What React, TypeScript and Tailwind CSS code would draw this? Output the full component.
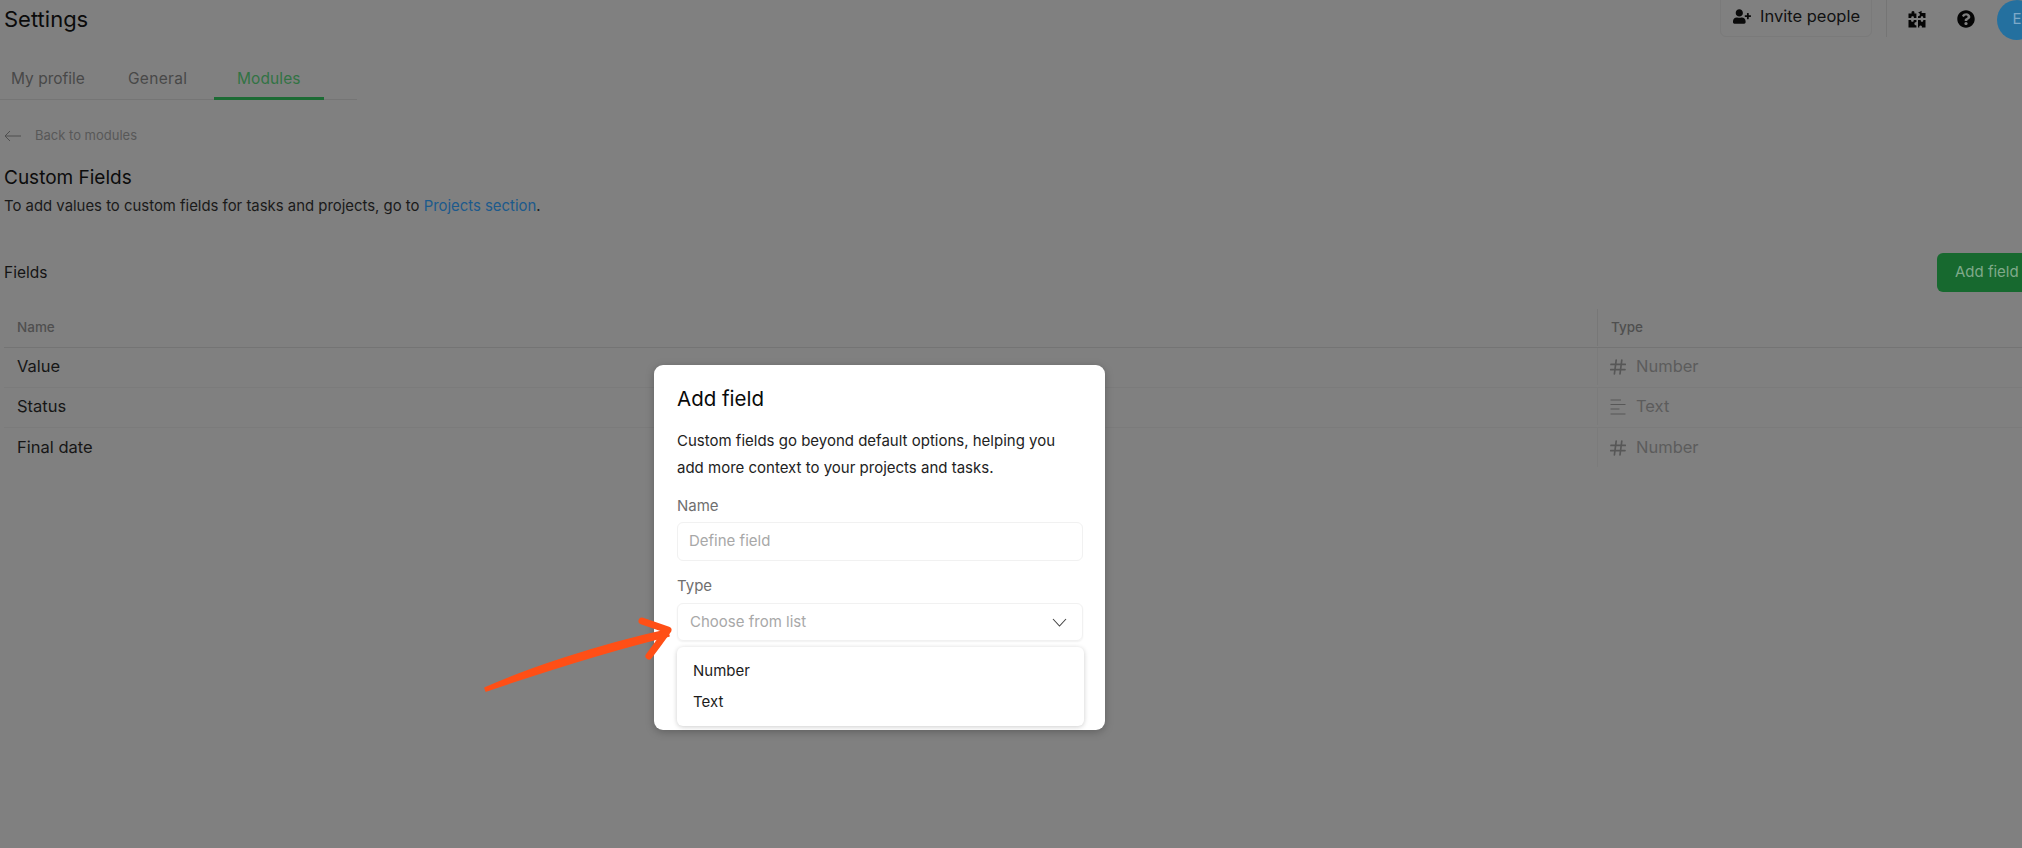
import React from "react";
import { FaUserPlus, FaQuestionCircle } from "react-icons/fa";

const poppins = "font-['Inter','Liberation_Sans',sans-serif]";

function HashIcon() {
  return (
    <svg width="16" height="16" viewBox="0 0 16 16" fill="none" stroke="#575757" strokeWidth="1.7" strokeLinecap="round">
      <path d="M1 5.4H15.4M0.6 10.6H15M6.2 1L4.4 15M11.8 1L10 15" />
    </svg>
  );
}

function LinesIcon() {
  return (
    <svg width="16" height="16" viewBox="0 0 16 16" fill="none" stroke="#575757" strokeWidth="1.2">
      <path d="M0.5 1H11M0.5 5.5H15.5M0.5 10H9.5M0.5 15H15.5" />
    </svg>
  );
}

function PuzzleIcon() {
  return (
    <svg width="18" height="18" viewBox="0 0 18 18" fill="#050505">
      <path d="M0.5 3.5H3.6C3.2 1.8 4 1 5 1S6.8 1.8 6.4 3.5H8.4V8H5.8C6.2 6.8 5.6 6.2 4.6 6.2S3 6.8 3.4 8H0.5Z" />
      <path d="M10 2.8L13.6 0.8V3H17.5V8H15.2C15.5 6.9 15 6.3 14 6.3S12.5 6.9 12.8 8H10V6.3C11.3 6.2 11.9 5.6 11.9 4.6S11.3 3 10 2.8Z" />
      <path d="M0.5 10H3.2C2.8 11.2 3.4 11.8 4.4 11.8S6 11.2 5.6 10H8.4V12C7 12.2 6.4 12.8 6.4 13.8S7 15.2 8.4 15.4V17.5H0.5Z" />
      <path d="M10 10H12.8C12.5 11.2 13 11.8 14 11.8S15.5 11.2 15.2 10H17.5V17.5H13.8C14.2 16.2 13.6 15.4 12.6 15.4S11 16.2 11.4 17.5H10Z" />
    </svg>
  );
}

const rows = [
  { name: "Value", type: "Number", icon: <HashIcon />, h: "h-10" },
  { name: "Status", type: "Text", icon: <LinesIcon />, h: "h-10" },
  { name: "Final date", type: "Number", icon: <HashIcon />, h: "h-[41px]" },
];

export default function App() {
  return (
    <div className={`relative h-[848px] w-full overflow-hidden bg-[#808080] ${poppins}`}>
      <div className="flex w-[2037px] flex-col pl-1">
        {/* top bar */}
        <div className="flex h-[37px] items-center justify-between">
          <h1 className="text-[22px] leading-none font-normal text-[#0b0b0b]">Settings</h1>
          <div className="flex h-[37px] items-center">
            <button className="flex h-[43px] w-[152px] -translate-y-[3px] items-center gap-[9px] rounded-md border border-[#7a7a7a] pt-[2px] pl-[12px] text-[16.5px] text-[#111111]">
              <FaUserPlus className="h-[15px] w-[18px] text-[#0a0a0a]" />
              Invite people
            </button>
            <div className="ml-[14px] h-[37px] w-px bg-[#757575]" />
            <div className="ml-[21px]">
              <PuzzleIcon />
            </div>
            <FaQuestionCircle className="ml-[31px] h-[18px] w-[18px] text-[#050505]" />
            <div className="ml-[22px] flex h-10 w-10 translate-y-px items-center justify-center rounded-full bg-[#24709f] text-[15px] text-[#7ea9c8]">
              E
            </div>
          </div>
        </div>

        {/* tabs */}
        <div className="-ml-1 mt-[24px] flex h-[39px] w-[357px] border-b border-[#757575] text-[15.5px] text-[#484848]">
          <span className="ml-[11px] w-[117px] pt-[8px] leading-[20px]">My profile</span>
          <span className="w-[86px] pt-[8px] leading-[20px] tracking-[0.3px]">General</span>
          <span className="relative w-[110px] pt-[8px] pl-[23px] leading-[20px] tracking-[0.1px] text-[#327344]">
            Modules
            <span className="absolute right-0 -bottom-px left-0 h-[3px] bg-[#1c6b34]" />
          </span>
        </div>

        {/* back link */}
        <div className="mt-[26px] flex h-5 items-center gap-[14px] text-[13px] text-[#585858]">
          <svg width="17" height="12" viewBox="0 0 17 12" fill="none" stroke="#4f4f4f" strokeWidth="1">
            <path d="M17 6H1M6 1L1 6L6 11" />
          </svg>
          Back to modules
        </div>

        <h2 className="mt-[19px] text-[19px] leading-[26px] font-normal text-[#0c0c0c]">Custom Fields</h2>
        <p className="mt-[2px] text-[14.9px] leading-[26px] text-[#1a1a1a]">
          To add values to custom fields for tasks and projects, go to{" "}
          <span className="text-[#1c5a8c]">Projects section</span>.
        </p>

        {/* fields heading */}
        <div className="mt-[34px] flex h-[39px] items-center justify-between">
          <span className="text-[15.5px] text-[#141414]">Fields</span>
          <button className="flex h-[39px] w-[100px] items-center rounded-l-md bg-[#17692f] pl-[18px] text-[15px] text-[#7fa98a]">
            Add field
          </button>
        </div>

        {/* table */}
        <div className="mt-[17px] flex w-full flex-col">
          <div className="flex h-[39px] border-b border-[#747474] pb-px text-[13.5px] font-medium text-[#4f4f4f]">
            <div className="flex flex-1 items-center pl-[13px]">Name</div>
            <div className="flex w-[440px] items-center border-l border-[#777777] pl-[13px]">Type</div>
          </div>
          {rows.map((r) => (
            <div key={r.name} className={`flex ${r.h} border-b border-[#7b7b7b] pb-[2px] last:border-b-0`}>
              <div className="flex flex-1 items-center pl-[13px] text-[16.5px] text-[#161616]">{r.name}</div>
              <div className="flex w-[440px] items-center gap-[10px] border-l border-[#7b7b7b] pl-[12px] text-[16.5px] text-[#5c5c5c]">
                {r.icon}
                {r.type}
              </div>
            </div>
          ))}
        </div>
      </div>

      {/* modal */}
      <div className="absolute top-[365px] left-[654px] h-[365px] w-[451px] rounded-[9px] bg-white px-[23px] pt-[21px] font-['Inter',sans-serif] shadow-[0_2px_8px_rgba(0,0,0,0.25)]">
        <h3 className="text-[20.5px] leading-[26px] font-normal text-[#0a0a0a]">Add field</h3>
        <p className="mt-[16px] max-w-[390px] text-[15px] leading-[26.5px] text-[#222222]">
          Custom fields go beyond default options, helping you add more context to your projects and tasks.
        </p>
        <label className="mt-[15px] block text-[15px] leading-[20px] text-[#6f6f6f]">Name</label>
        <div className="mt-[6px] flex h-[39px] w-[406px] items-center rounded-md border border-[#f1f1f1] pl-[11px] text-[15px] text-[#a8a8a8]">
          Define field
        </div>
        <label className="mt-[15px] block text-[15px] leading-[20px] text-[#6f6f6f]">Type</label>
        <div className="mt-[7px] flex h-[38px] w-[406px] items-center justify-between rounded-md border border-[#f1f1f1] pr-[15px] pl-[12px] text-[15px] text-[#a8a8a8] shadow-[0_1px_2px_rgba(0,0,0,0.06)]">
          Choose from list
          <svg width="15" height="9" viewBox="0 0 15 9" fill="none" stroke="#444444" strokeWidth="1.1">
            <path d="M1 1L7.5 8L14 1" />
          </svg>
        </div>
        {/* dropdown */}
        <div className="absolute top-[282px] left-[23px] flex h-[79px] w-[407px] flex-col rounded-md bg-white pt-[11px] pl-[16px] text-[15px] text-[#1c1c1c] shadow-[0_1px_5px_rgba(0,0,0,0.2)]">
          <span className="leading-[26px]">Number</span>
          <span className="mt-[5px] leading-[26px]">Text</span>
        </div>
      </div>

      {/* annotation arrow */}
      <svg className="absolute top-[610px] left-[475px]" width="210" height="90" viewBox="0 0 210 90" fill="none" stroke="#ff4f16" strokeLinecap="round" strokeLinejoin="round">
        <path d="M10 78C50 60 120 36 192 20L194 26C120 44 55 66 11 81Z" fill="#ff4f16" strokeWidth="1.5" />
        <path d="M167 11L193 20C186 30 180 38 174 46" strokeWidth="7" />
      </svg>
    </div>
  );
}
